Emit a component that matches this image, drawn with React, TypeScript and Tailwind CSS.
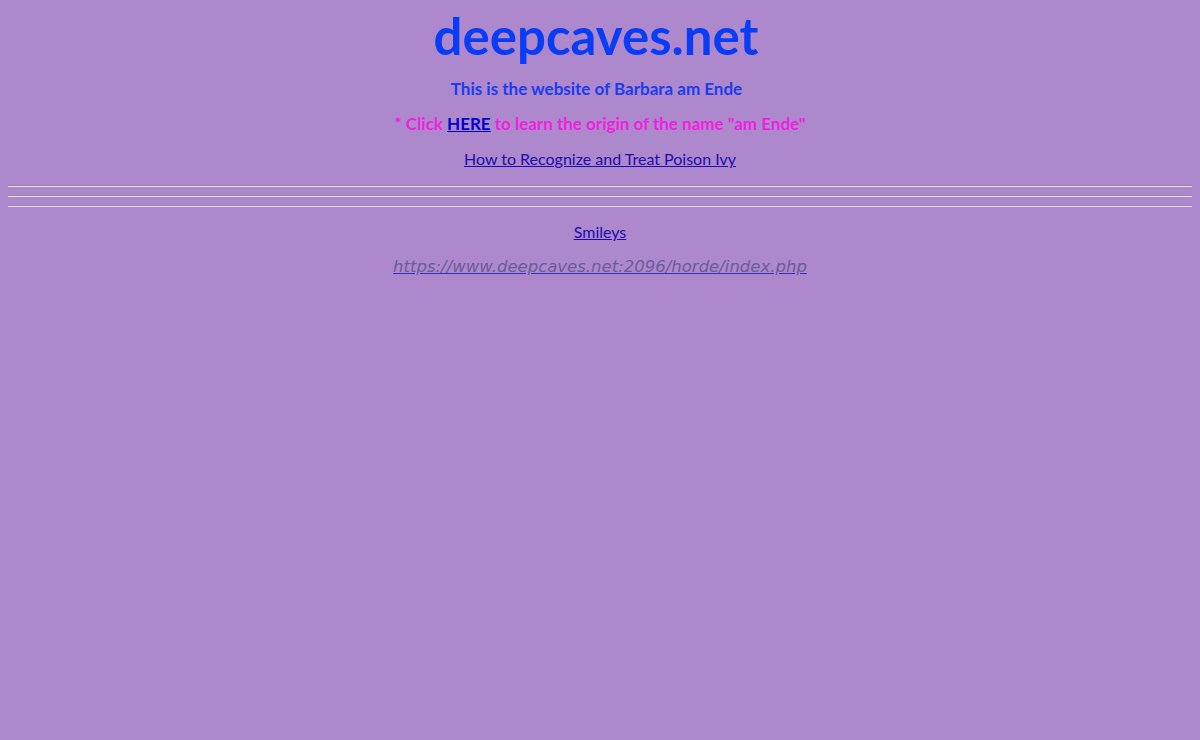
export default function App() {
  return (
    <div className="min-h-[740px] w-full bg-[#ae88cc] px-2 pt-[10px] text-center">
      <div className="font-['Lato',sans-serif]">
        <h1 className="pr-[8px] text-[51px] leading-[52px] font-bold text-[#0a3cf5] [font-family:Lato,sans-serif]">deepcaves.net</h1>
        <p className="mt-[17px] pr-[7px] text-[17px] leading-[20px] font-bold text-[#1a3cf0]">This is the website of Barbara am Ende</p>
        <p className="mt-[15px] text-[17px] leading-[20px] font-bold text-[#f01ee0]">
          * Click <a href="#" className="underline text-[#0000cc]">HERE</a> to learn the origin of the name "am Ende"
        </p>
        <p className="mt-[15px] text-[16px] leading-[20px]">
          <a href="#" className="underline text-[#1a0dab]">How to Recognize and Treat Poison Ivy</a>
        </p>
        <div className="mt-[16px] flex flex-col gap-[8px]">
          <div className="h-[2px] border-t border-[#9a82b0] bg-[#ece0f0]"></div>
          <div className="h-[2px] border-t border-[#9a82b0] bg-[#ece0f0]"></div>
          <div className="h-[2px] border-t border-[#9a82b0] bg-[#ece0f0]"></div>
        </div>
        <p className="mt-[15px] text-[16px] leading-[20px]">
          <a href="#" className="underline text-[#1a0dab]">Smileys</a>
        </p>
        <p className="mt-[14px] text-[16.5px] leading-[22px] italic [font-family:'DejaVu_Sans',sans-serif]">
          <a href="#" className="underline text-[#6a5c9a] decoration-[#3030c0]">https://www.deepcaves.net:2096/horde/index.php</a>
        </p>
      </div>
    </div>
  );
}
